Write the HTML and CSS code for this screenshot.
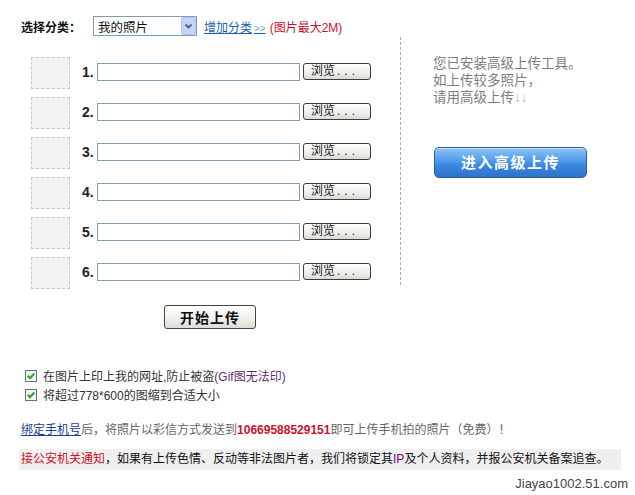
FILE: index.html
```html
<!DOCTYPE html>
<html lang="zh-CN">
<head>
    <meta charset="UTF-8">
    <title>上传照片</title>
    <link rel="stylesheet" href="styles.css">
</head>
<body>
    <div class="page">
        <div class="cat-row">
            <span class="cat-label">选择分类：</span>
            <div class="cat-select">
                <span class="cat-value">我的照片</span>
                <span class="cat-arrow">
                    <svg width="15" height="18" viewBox="0 0 15 18">
                        <rect x="0.5" y="0.5" width="14" height="17" rx="1.5" fill="#c5d5f6" stroke="#b3c5ea"/>
                        <path d="M4.5 7.5 L7.5 10.5 L10.5 7.5" fill="none" stroke="#4d6185" stroke-width="1.8"/>
                    </svg>
                </span>
            </div>
            <a class="add-cat" href="#">增加分类<span class="gt">&gt;&gt;</span></a>
            <span class="size-note">(图片最大2M)</span>
        </div>

        <div class="upload">
            <div class="upload-left">
                <div class="file-row">
                    <div class="thumb"></div>
                    <span class="num">1.</span>
                    <span class="file-input"></span>
                    <span class="browse">浏览<span class="dots">...</span></span>
                </div>
                <div class="file-row">
                    <div class="thumb"></div>
                    <span class="num">2.</span>
                    <span class="file-input"></span>
                    <span class="browse">浏览<span class="dots">...</span></span>
                </div>
                <div class="file-row">
                    <div class="thumb"></div>
                    <span class="num">3.</span>
                    <span class="file-input"></span>
                    <span class="browse">浏览<span class="dots">...</span></span>
                </div>
                <div class="file-row">
                    <div class="thumb"></div>
                    <span class="num">4.</span>
                    <span class="file-input"></span>
                    <span class="browse">浏览<span class="dots">...</span></span>
                </div>
                <div class="file-row">
                    <div class="thumb"></div>
                    <span class="num">5.</span>
                    <span class="file-input"></span>
                    <span class="browse">浏览<span class="dots">...</span></span>
                </div>
                <div class="file-row">
                    <div class="thumb"></div>
                    <span class="num">6.</span>
                    <span class="file-input"></span>
                    <span class="browse">浏览<span class="dots">...</span></span>
                </div>
            </div>
            <div class="upload-right">
                <p class="tool-note">您已安装高级上传工具。<br>如上传较多照片，<br>请用高级上传<span class="arrows">↓↓</span></p>
                <a class="adv-btn" href="#">进入高级上传</a>
            </div>
        </div>

        <button class="start-btn">开始上传</button>

        <div class="options">
            <div class="option">
                <svg class="check" width="12" height="12" viewBox="0 0 12 12">
                    <rect x="0.5" y="0.5" width="11" height="11" fill="#f6f6f2" stroke="#5f7385"/>
                    <path d="M2.8 5.8 L5 8.2 L9.3 3.5" fill="none" stroke="#26a226" stroke-width="2"/>
                </svg>
                <span>在图片上印上我的网址,防止被盗<span class="purple">(Gif图无法印)</span></span>
            </div>
            <div class="option">
                <svg class="check" width="12" height="12" viewBox="0 0 12 12">
                    <rect x="0.5" y="0.5" width="11" height="11" fill="#f6f6f2" stroke="#5f7385"/>
                    <path d="M2.8 5.8 L5 8.2 L9.3 3.5" fill="none" stroke="#26a226" stroke-width="2"/>
                </svg>
                <span>将超过778*600的图缩到合适大小</span>
            </div>
        </div>

        <p class="mobile-note"><a href="#">绑定手机号</a>后，将照片以彩信方式发送到<b class="red">10669588529151</b>即可上传手机拍的照片（免费）！</p>

        <p class="notice"><span class="red">接公安机关通知</span>，如果有上传色情、反动等非法图片者，我们将锁定其<span class="ip">IP</span>及个人资料，并报公安机关备案追查。</p>

        <div class="footer">Jiayao1002.51.com</div>
    </div>
</body>
</html>
```

FILE: styles.css
```css
body {
    margin: 0;
    background: #fff;
    font-family: "Liberation Sans", "Noto Sans CJK SC", sans-serif;
    font-size: 12px;
    color: #333;
}
.page {
    width: 635px;
}
.cat-row {
    display: flex;
    align-items: center;
    margin-top: 16px;
    padding-left: 21px;
    height: 20px;
}
.cat-label {
    font-weight: bold;
    color: #111;
    width: 72px;
}
.cat-select {
    display: flex;
    align-items: center;
    justify-content: space-between;
    box-sizing: border-box;
    width: 104px;
    height: 20px;
    border: 1px solid #7f9db9;
    padding: 0 0 0 4px;
    font-size: 12.5px;
    color: #111;
}
.cat-arrow {
    display: flex;
}
.add-cat {
    margin-left: 7px;
    color: #1f5fa8;
    text-decoration: underline;
}
.add-cat .gt {
    color: #6f9fd6;
    font-size: 10px;
    padding-left: 2px;
}
.size-note {
    margin-left: 4px;
    color: #c8102e;
}
.upload {
    display: flex;
    align-items: flex-start;
    margin-top: 1px;
}
.upload-left {
    display: flex;
    flex-direction: column;
    gap: 8px;
    width: 369px;
    margin-left: 31px;
    padding-top: 20px;
}
.file-row {
    display: flex;
    align-items: center;
    height: 32px;
}
.thumb {
    box-sizing: border-box;
    width: 39px;
    height: 32px;
    border: 1px dashed #c8c8c8;
    background: #f2f2f2;
}
.num {
    width: 15px;
    margin-left: 12px;
    margin-top: -2px;
    font-family: "Liberation Sans", sans-serif;
    font-size: 14px;
    font-weight: bold;
    color: #222;
}
.file-input {
    box-sizing: border-box;
    width: 203px;
    height: 18px;
    margin-top: -3px;
    border: 1px solid #7f9db9;
    background: #fff;
}
.browse {
    box-sizing: border-box;
    width: 68px;
    height: 17px;
    margin-left: 3px;
    margin-top: -3px;
    padding-left: 7px;
    border: 1px solid #3c3c3c;
    border-radius: 3px;
    background: linear-gradient(#ffffff, #ecebe6 70%, #d9d8d2);
    font-size: 12px;
    line-height: 15px;
    color: #111;
}
.browse .dots {
    letter-spacing: 4px;
    padding-left: 2px;
}
.upload-right {
    box-sizing: border-box;
    height: 248px;
    flex: 1;
    border-left: 1px dashed #aaa;
    padding: 18px 0 0 32px;
}
.tool-note {
    margin: 0;
    font-size: 13.5px;
    line-height: 17px;
    color: #7d7d7d;
}
.arrows {
    color: #b5b5b5;
}
.adv-btn {
    display: block;
    box-sizing: border-box;
    width: 153px;
    height: 31px;
    margin-top: 41px;
    margin-left: 1px;
    border: 1px solid #2d5fa0;
    border-radius: 5px;
    background: linear-gradient(#8cc4f6, #4f9be8 45%, #3a86e0 60%, #2f72cc);
    box-shadow: inset 0 1px 0 rgba(255, 255, 255, 0.5);
    color: #fff;
    font-size: 15px;
    font-weight: bold;
    letter-spacing: 1.5px;
    line-height: 29px;
    text-align: center;
    text-decoration: none;
}
.start-btn {
    display: block;
    box-sizing: border-box;
    width: 92px;
    height: 24px;
    margin: 16px 0 0 164px;
    padding: 0;
    border: 1px solid #444;
    border-radius: 3px;
    background: linear-gradient(#ffffff, #f0efea 60%, #dcdbd5);
    font-family: "Noto Sans CJK SC", sans-serif;
    font-size: 14px;
    font-weight: bold;
    letter-spacing: 1px;
    color: #111;
}
.options {
    margin-top: 37px;
    padding-left: 25px;
}
.option {
    display: flex;
    align-items: center;
    height: 19px;
    color: #333;
}
.check {
    margin-right: 6px;
}
.purple {
    color: #6a2a6a;
}
.mobile-note {
    margin: 16px 0 0 21px;
    line-height: 20px;
    color: #666;
}
.mobile-note a {
    color: #1c3f94;
    text-decoration: underline;
}
.red {
    color: #d0102b;
}
b.red {
    font-family: "Liberation Sans", sans-serif;
}
.notice {
    box-sizing: border-box;
    width: 602px;
    height: 21px;
    margin: 9px 0 0 19px;
    padding-left: 2px;
    background: #efefef;
    line-height: 21px;
    color: #111;
}
.ip {
    color: #800080;
}
.footer {
    margin-top: 6px;
    padding-right: 7px;
    text-align: right;
    font-size: 13px;
    line-height: 16px;
    color: #444;
}
```
